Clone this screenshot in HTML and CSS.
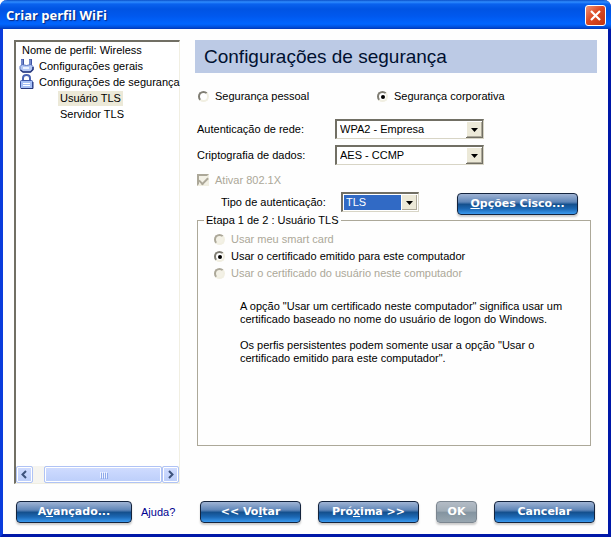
FILE: index.html
```html
<!DOCTYPE html>
<html lang="pt-BR">
<head>
<meta charset="utf-8">
<meta name="viewport" content="width=device-width, initial-scale=1">
<title>Criar perfil WiFi</title>
<link rel="stylesheet" href="styles.css">
</head>
<body>

<div class="window">
  <div class="titlebar">
    <span class="title">Criar perfil WiFi</span>
    <button type="button" class="close" aria-label="Fechar">
      <svg width="19" height="19" viewBox="0 0 19 19"><path d="M5 5l9 9M14 5l-9 9" stroke="#fff" stroke-width="2.2"/></svg>
    </button>
  </div>

  <form class="content" action="">
    <div class="main">
      <div class="sidebar">
        <ul class="tree">
          <li class="root">Nome de perfil: Wireless</li>
          <li>
            <svg width="16" height="16" viewBox="0 0 16 16">
              <path d="M3.500 1v7M11.500 1v7" stroke="#3c52a4" stroke-width="3"/>
              <path d="M3 1.500v6M11 1.500v6" stroke="#a9bdf0" stroke-width="1"/>
              <path d="M3 6.500q4.500 2 9 0l2 2v3l-3 2.500H4l-3-2.500v-3z" fill="#b4c8f5" stroke="#5a74c0"/>
              <path d="M1.500 12l2.500 2h7.500l2.500-2.500V9" fill="none" stroke="#26377c" stroke-width="1.500"/>
              <path d="M4 10h6" stroke="#fff" stroke-width="1.500"/>
            </svg>
            Configurações gerais
          </li>
          <li>
            <svg width="16" height="16" viewBox="0 0 16 16">
              <path d="M4 7V4q0-3 3.500-3T11 4v3" fill="none" stroke="#4a64b4" stroke-width="2"/>
              <rect x="1.500" y="6.500" width="12" height="8" rx="1" fill="#a6c0f5" stroke="#3c56a8"/>
              <path d="M4 9.500h7M4 11.500h7" stroke="#fff"/>
              <path d="M2 14.500h12V8" fill="none" stroke="#26377c"/>
            </svg>
            Configurações de segurança
          </li>
          <li class="child"><span class="selected">Usuário TLS</span></li>
          <li class="child"><span>Servidor TLS</span></li>
        </ul>
        <div class="scrollbar">
          <button type="button" class="scroll-btn" aria-label="Rolar para a esquerda">
            <svg width="9" height="9" viewBox="0 0 9 9"><path d="M6 1L2.500 4.500 6 8" fill="none" stroke="#3d527c" stroke-width="2"/></svg>
          </button>
          <div class="thumb"><i></i><i></i><i></i><i></i></div>
          <button type="button" class="scroll-btn" aria-label="Rolar para a direita">
            <svg width="9" height="9" viewBox="0 0 9 9"><path d="M3 1l3.500 3.500L3 8" fill="none" stroke="#3d527c" stroke-width="2"/></svg>
          </button>
        </div>
      </div>

      <div class="settings">
        <h1>Configurações de segurança</h1>

        <div class="modes">
          <label><input type="radio" name="mode"> Segurança pessoal</label>
          <label><input type="radio" name="mode" checked> Segurança corporativa</label>
        </div>

        <div class="row">
          <label for="auth">Autenticação de rede:</label>
          <select id="auth"><option>WPA2 - Empresa</option></select>
        </div>
        <div class="row">
          <label for="cipher">Criptografia de dados:</label>
          <select id="cipher"><option>AES - CCMP</option></select>
        </div>

        <label class="check disabled"><input type="checkbox" checked disabled> Ativar 802.1X</label>

        <div class="row type-row">
          <label for="type">Tipo de autenticação:</label>
          <select id="type" class="focused"><option>TLS</option></select>
          <button type="button" class="btn cisco"><u>O</u>pções Cisco...</button>
        </div>

        <fieldset>
          <legend>Etapa 1 de 2 : Usuário TLS</legend>
          <label class="disabled"><input type="radio" name="cert" disabled> Usar meu smart card</label>
          <label><input type="radio" name="cert" checked> Usar o certificado emitido para este computador</label>
          <label class="disabled"><input type="radio" name="cert" disabled> Usar o certificado do usuário neste computador</label>
          <div class="notes">
            <p>A opção "Usar um certificado neste computador" significa usar um certificado baseado no nome do usuário de logon do Windows.</p>
            <p>Os perfis persistentes podem somente usar a opção "Usar o certificado emitido para este computador".</p>
          </div>
        </fieldset>
      </div>
    </div>

    <div class="footer">
      <button type="button" class="btn advanced">A<u>v</u>ançado...</button>
      <a href="#" class="help">Ajuda?</a>
      <div class="nav">
        <button type="button" class="btn">&lt;&lt; Vo<u>l</u>tar</button>
        <button type="button" class="btn">Pró<u>x</u>ima &gt;&gt;</button>
        <button type="button" class="btn ok" disabled>OK</button>
        <button type="button" class="btn">Cancelar</button>
      </div>
    </div>
  </form>
</div>

</body>
</html>
```
FILE: styles.css
```css
* {
    box-sizing: border-box;
}

body {
    margin: 0;
    background-color: white;
    font-family: "Liberation Sans", Arial, sans-serif;
    font-size: 11px;
    line-height: 13px;
    color: black;
}

.window {
    display: flex;
    flex-direction: column;
    min-height: 100vh;
    border: solid #0a3bdc;
    border-width: 0 3px 3px 3px;
    border-right-color: #0018a8;
    border-bottom-color: #0018a8;
    border-radius: 7px 7px 0 0;
    background: #fefefe;
}

.titlebar {
    display: flex;
    align-items: center;
    justify-content: space-between;
    height: 29px;
    margin: 0 -3px;
    padding: 2px 5px 0 6px;
    border-radius: 7px 7px 0 0;
    background: linear-gradient(#0a4fc8 0, #2f8cff 2px, #0a62ee 4px, #0054e3 9px, #0058ee 16px, #0066ff 24px, #0050dc 27px, #0038b8 29px);
}

.title {
    font-family: "Open Sans", sans-serif;
    font-size: 13px;
    font-weight: bold;
    color: white;
    text-shadow: 1px 1px 1px #0a2a80;
}

.close {
    display: flex;
    width: 21px;
    height: 21px;
    padding: 0;
    border: 1px solid white;
    border-radius: 3px;
    background: linear-gradient(135deg, #ee9478, #dc4a24 45%, #c03410);
}

.content {
    flex: 1;
    display: flex;
    flex-direction: column;
    padding: 11px 11px;
}

.main {
    flex: 1;
    display: grid;
    grid-template-columns: 166px 1fr;
    gap: 15px;
}

.sidebar {
    display: flex;
    flex-direction: column;
    justify-content: space-between;
    min-width: 0;
    border: 2px solid #716f64;
    border-right: 1px solid #f1efe2;
    border-bottom: 1px solid #f1efe2;
    background: white;
}

.tree {
    margin: 0;
    padding: 0 0 0 3px;
    list-style: none;
    white-space: nowrap;
}

.tree li {
    display: flex;
    align-items: center;
    gap: 4px;
    height: 16px;
}

.tree svg {
    flex: none;
}

.tree .root {
    padding-left: 3px;
}

.tree .child {
    padding-left: 39px;
}

.tree .child span {
    padding: 1px 2px;
}

.tree .selected {
    background: #ece9d8;
}

.scrollbar {
    display: flex;
    height: 17px;
    background: #f6f5f0;
}

.scroll-btn, .thumb {
    display: flex;
    align-items: center;
    justify-content: center;
    border: 1px solid #b0c3f5;
    border-radius: 2px;
    background: linear-gradient(#d0dcff, #bccefa);
    box-shadow: inset 0 0 0 1px white;
}

.scroll-btn {
    flex: none;
    width: 17px;
    padding: 0;
}

.thumb {
    flex: 1;
    gap: 1px;
    margin-left: 11px;
}

.thumb i {
    width: 1px;
    height: 6px;
    background: #eef3ff;
    box-shadow: 1px 1px 0 #8fa9ea;
}

.settings {
    display: flex;
    flex-direction: column;
    padding-bottom: 38px;
}

h1 {
    margin: 0 0 17px;
    padding: 0 9px;
    background: #bccae5;
    font-size: 19px;
    font-weight: normal;
    line-height: 33px;
    color: #001030;
}

.settings label {
    display: flex;
    align-items: center;
}

.modes {
    display: grid;
    grid-template-columns: 179px 1fr;
    height: 13px;
    margin: 0 0 16px 3px;
}

input[type=radio], input[type=checkbox] {
    appearance: none;
    flex: none;
    display: grid;
    place-items: center;
    width: 12px;
    height: 12px;
    margin: 0 6px 0 0;
    border: 2px solid #807e74;
    border-right-color: #f1efe2;
    border-bottom-color: #f1efe2;
    background: white;
}

input[type=radio] {
    width: 11px;
    height: 11px;
    border-radius: 50%;
}

input[type=radio]:checked::after {
    content: "";
    width: 4px;
    height: 4px;
    border-radius: 50%;
    background: black;
}

input[type=checkbox]:checked::after {
    content: "";
    width: 7px;
    height: 4px;
    border: solid #aca899;
    border-width: 0 0 2px 2px;
    transform: rotate(-45deg);
}

input:disabled {
    border-color: #aca899 #f1efe2 #f1efe2 #aca899;
    background: #f3f1e6;
}

.disabled {
    color: #aca899;
}

.row {
    display: flex;
    align-items: center;
    height: 20px;
    margin: 0 0 6px 2px;
}

.row label {
    width: 138px;
}

select {
    appearance: none;
    width: 149px;
    height: 20px;
    padding: 0 20px 0 3px;
    border: 2px solid #716f64;
    border-right: 1px solid #d8d5c6;
    border-bottom: 1px solid #d8d5c6;
    border-radius: 0;
    background: white url("data:image/svg+xml,%3Csvg xmlns='http://www.w3.org/2000/svg' width='17' height='17'%3E%3Cpath d='M0 0h17v17H0z' fill='%23716f64'/%3E%3Cpath d='M0 0h16v16H0z' fill='%23fff'/%3E%3Cpath d='M1 1h15v15H1z' fill='%23aca899'/%3E%3Cpath d='M1 1h14v14H1z' fill='%23ece9d8'/%3E%3Cpath d='M5 7h7L8.500 11z' fill='%23000'/%3E%3C/svg%3E") no-repeat right center;
    font: inherit;
    color: black;
}

select.focused {
    width: 78px;
    background-color: #316ac5;
    box-shadow: inset 0 0 0 1px white;
    color: white;
}

.check {
    height: 16px;
    margin: 1px 0 4px 2px;
}

.type-row {
    margin: 0 0 6px 26px;
}

.type-row label {
    width: 120px;
}

.btn {
    width: 101px;
    height: 22px;
    padding: 0;
    border: 1px solid #14243e;
    border-radius: 4px;
    background: linear-gradient(#a0b4d4, #5f86b8 40%, #14508e 52%, #1c68b4 75%, #3a9af0);
    box-shadow: 0 2px 2px #ccc;
    font-family: "DejaVu Sans", Verdana, sans-serif;
    font-size: 11px;
    font-weight: bold;
    line-height: 20px;
    color: white;
}

.btn.cisco {
    width: 121px;
    margin: 4px 19px 0 auto;
}

.btn.advanced {
    width: 116px;
}

.btn.ok {
    width: 41px;
    border-color: #7c8690;
    background: linear-gradient(#b4bcc6, #a0acb6 45%, #8494a0 52%, #98a6b0);
}

fieldset {
    flex: 1;
    min-width: 0;
    margin: -4px 6px 0 2px;
    padding: 4px 16px;
    border: 1px solid #aca899;
}

legend {
    margin-left: -10px;
    padding: 0 2px;
}

fieldset label {
    height: 17px;
}

.notes {
    padding: 18px 4px 0 26px;
}

.notes p {
    margin: 0 0 13px;
}

.footer {
    display: flex;
    align-items: center;
    padding: 17px 2px 0;
}

.help {
    margin-left: 9px;
    color: #000090;
    text-decoration: none;
}

.nav {
    display: flex;
    gap: 17px;
    margin-left: auto;
}
```
